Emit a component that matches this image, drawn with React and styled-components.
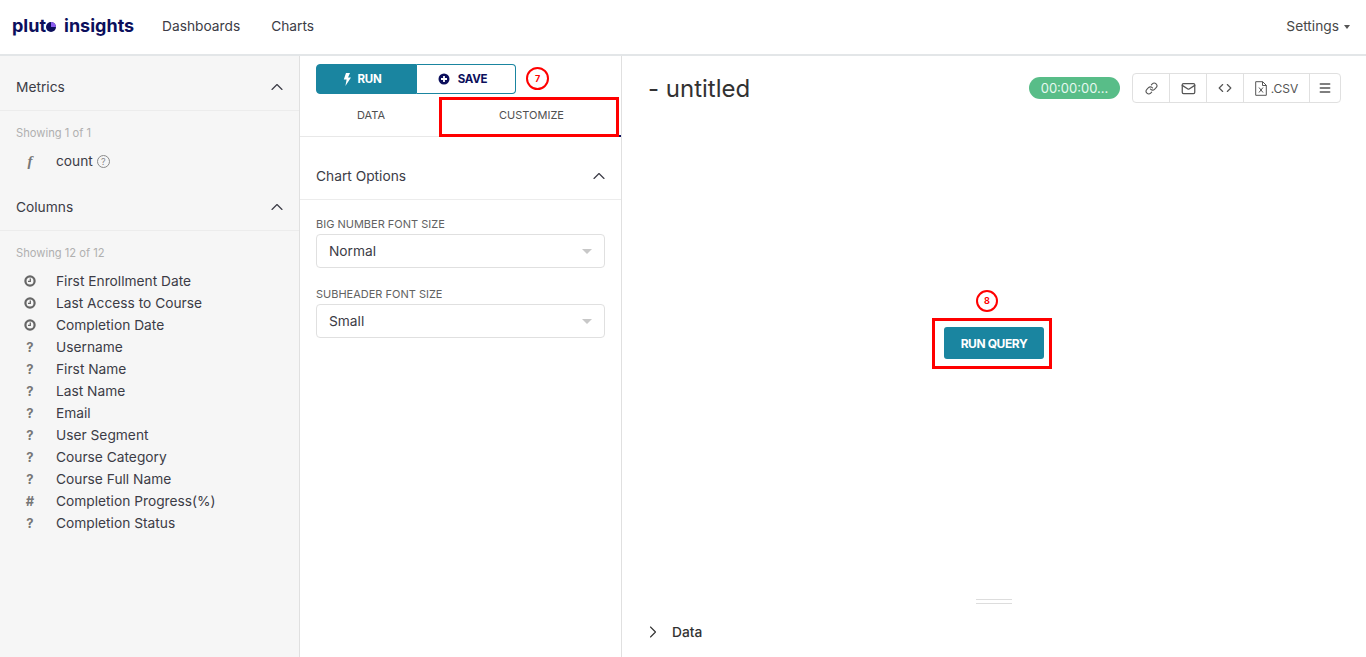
import React from "react";
import styled, { createGlobalStyle } from "styled-components";
import { ChevronUp, ChevronRight, Link, Mail, Code, Menu } from "lucide-react";

const GlobalStyle = createGlobalStyle`
  html, body { margin: 0; padding: 0; height: 100%; background: #fff; overflow: hidden; }
  * { box-sizing: border-box; }
  body { font-family: "Inter", "Open Sans", sans-serif; color: #323232; }
`;

const Page = styled.div`
  width: 1366px;
  height: 657px;
  display: flex;
  flex-direction: column;
`;
const Header = styled.header`
  height: 56px;
  flex: none;
  display: flex;
  align-items: center;
  padding: 0 16px 2px 12px;
  border-bottom: 2px solid #e3e6e8;
`;
const Logo = styled.div`
  width: 150px;
  margin-top: -2px;
  font-size: 18px;
  font-weight: 700;
  color: #0c0f5c;
  display: flex;
  align-items: center;
`;
const LogoMark = styled.svg`
  width: 10px;
  height: 10px;
  margin: 3px 8px 0 0;
`;
const NavLink = styled.a`
  font-size: 13.75px;
  color: #3c3c46;
  margin-right: 31px;
`;
const Settings = styled.div`
  margin-left: auto;
  font-size: 13.75px;
  color: #484848;
  display: flex;
  align-items: center;
  gap: 5px;
  &::after {
    content: "";
    border: 3px solid transparent;
    border-top: 4px solid #555;
    margin-top: 4px;
  }
`;
const Body = styled.div`
  flex: 1;
  display: flex;
  min-height: 0;
`;
const Sidebar = styled.aside`
  width: 300px;
  flex: none;
  background: #f6f6f6;
  border-right: 1px solid #e0e0e0;
`;
const SectionHead = styled.div`
  height: ${(p) => (p.$tall ? 63 : 55)}px;
  display: flex;
  align-items: center;
  justify-content: space-between;
  padding: ${(p) => (p.$tall ? 15 : 7)}px 12px 0 16px;
  font-size: 13.75px;
  color: #3c3c46;
  border-bottom: 1px solid #ececec;
`;
const Showing = styled.div`
  font-size: 11.2px;
  color: #b0b0b0;
  padding: 15px 16px 9px;
  line-height: 15px;
`;
const FieldList = styled.div`
  margin-bottom: ${(p) => p.$gap || 0}px;
`;
const FieldRow = styled.div`
  height: 22px;
  display: flex;
  align-items: center;
  font-size: 13.75px;
  color: #3c3c46;
`;
const FieldIcon = styled.span`
  width: 56px;
  flex: none;
  padding-left: 4px;
  display: flex;
  justify-content: center;
  color: #777;
  font-size: ${(p) => (p.$serif ? 15 : 13)}px;
  font-weight: 700;
  font-family: ${(p) => (p.$serif ? '"Liberation Serif", serif' : '"Inter", sans-serif')};
  font-style: ${(p) => (p.$serif ? "italic" : "normal")};
`;
const HelpMark = styled.span`
  width: 13px;
  height: 13px;
  margin-left: 4px;
  border: 1px solid #8a8a8a;
  border-radius: 50%;
  font-size: 9px;
  line-height: 11px;
  text-align: center;
  color: #8a8a8a;
`;
const Controls = styled.section`
  width: 322px;
  flex: none;
  border-right: 1px solid #e0e0e0;
`;
const ActionRow = styled.div`
  display: flex;
  align-items: center;
  padding: 8px 16px 3px;
  height: 41px;
`;
const RunButton = styled.button`
  width: 101px;
  height: 30px;
  border: 1px solid #1a85a0;
  border-radius: 4px 0 0 4px;
  background: #1a85a0;
  color: #fff;
  font: 700 11.5px "Inter", sans-serif;
  letter-spacing: -0.3px;
  display: flex;
  align-items: center;
  justify-content: center;
  gap: 7px;
  padding: 0 9px 0 0;
`;
const SaveButton = styled(RunButton)`
  width: 99px;
  border-left: none;
  border-radius: 0 4px 4px 0;
  background: #fff;
  color: #0c0f5c;
  gap: 8px;
  padding: 0 7px 0 0;
`;
const StepBadge = styled.span`
  width: ${(p) => p.$size}px;
  height: ${(p) => p.$size}px;
  border: 2px solid #f00;
  border-radius: 50%;
  color: #f00;
  font: 700 9px/${(p) => p.$size - 4}px "Inter", sans-serif;
  text-align: center;
  flex: none;
`;
const RowBadge = styled(StepBadge)`
  margin: -2px 0 0 10px;
`;
const CanvasBadge = styled(StepBadge)`
  margin-right: 14px;
`;
const Tabs = styled.div`
  height: 40px;
  display: flex;
  border-bottom: 1px solid #e8e8e8;
`;
const Tab = styled.div`
  position: relative;
  width: ${(p) => p.$w}px;
  flex: none;
  display: flex;
  align-items: center;
  justify-content: center;
  font-size: 11px;
  color: #505050;
  padding-bottom: 2px;
  margin-bottom: -1px;
  border-bottom: 2px solid ${(p) => (p.$active ? "#0c0f5c" : "transparent")};
`;
const TabHighlight = styled.span`
  position: absolute;
  left: -3px;
  top: 0;
  width: 180px;
  height: 40px;
  border: 3px solid #f00;
`;
const OptionsBody = styled.div`
  padding: 7px 16px 0;
`;
const Label = styled.div`
  font-size: 11px;
  color: #626262;
  margin: ${(p) => p.$top}px 0 3px;
  line-height: 14px;
`;
const Select = styled.div`
  height: 34px;
  border: 1px solid #e0e0e0;
  border-radius: 4px;
  display: flex;
  align-items: center;
  justify-content: space-between;
  padding: 0 12px;
  font-size: 13.75px;
  color: #3c3c46;
  &::after {
    content: "";
    border: 5px solid transparent;
    border-top: 5px solid #c8c8c8;
    border-bottom: none;
  }
`;
const Main = styled.main`
  flex: 1;
  display: flex;
  flex-direction: column;
  min-width: 0;
`;
const TitleBar = styled.div`
  height: 66px;
  flex: none;
  display: flex;
  align-items: center;
  padding: 0 25px 2px 26px;
`;
const ChartTitle = styled.h1`
  margin: 0;
  font-size: 24px;
  font-weight: 400;
  color: #323232;
`;
const Timer = styled.span`
  margin-left: auto;
  width: 91px;
  height: 22px;
  border-radius: 11px;
  background: #58bd88;
  color: #e6f8ef;
  font-size: 13px;
  line-height: 22px;
  text-align: center;
`;
const ToolGroup = styled.div`
  margin-left: 12px;
  height: 30px;
  display: flex;
  border: 1px solid #e0e0e0;
  border-radius: 4px;
`;
const ToolButton = styled.div`
  width: ${(p) => p.$w || 37}px;
  display: flex;
  align-items: center;
  justify-content: center;
  gap: 4px;
  font-size: 12px;
  color: #555;
  & + & { border-left: 1px solid #e0e0e0; }
`;
const QueryArea = styled.div`
  flex: 1;
  display: flex;
  flex-direction: column;
  align-items: center;
  justify-content: center;
  padding-bottom: 63px;
  min-height: 0;
`;
const QueryBox = styled.div`
  margin: 6px 4px 0 0;
  width: 120px;
  height: 51px;
  border: 3px solid #f00;
  padding-left: 9px;
  display: flex;
  align-items: center;
`;
const QueryButton = styled.button`
  width: 100px;
  height: 32px;
  border: none;
  border-radius: 3px;
  background: #1a85a0;
  color: #fff;
  font: 700 12px "Inter", sans-serif;
  letter-spacing: -0.4px;
  padding: 0;
`;
const Splitter = styled.div`
  height: 5px;
  width: 36px;
  flex: none;
  align-self: center;
  margin-bottom: 17px;
  border-top: 1px solid #ddd;
  border-bottom: 1px solid #ddd;
`;
const DataToggle = styled.div`
  height: 22px;
  flex: none;
  margin-bottom: 14px;
  display: flex;
  align-items: center;
  gap: 9px;
  padding-left: 21px;
  font-size: 13.75px;
  font-weight: 500;
  color: #323232;
`;

const Clock = () => (
  <svg width="12" height="12" viewBox="0 0 12 12" fill="none" stroke="#666">
    <circle cx="6" cy="6" r="4.6" strokeWidth="2.2" />
    <path d="M6.3 3.4V6.3H4" strokeWidth="1.3" />
  </svg>
);
const Bolt = () => (
  <svg width="8" height="13" viewBox="0 0 8 13" fill="#fff">
    <path d="M3 0h4L5 4.6h3L2.4 13l1.2-6.6H.8z" />
  </svg>
);
const PlusCircle = () => (
  <svg width="12" height="12" viewBox="0 0 12 12">
    <circle cx="6" cy="6" r="5.5" fill="#0c0f5c" />
    <path d="M6 3v6M3 6h6" stroke="#fff" strokeWidth="1.8" />
  </svg>
);
const CsvFile = () => (
  <svg width="12" height="15" viewBox="0 0 12 15" fill="none" stroke="#555">
    <path d="M.7.7h7l3.6 3.6v10H.7zM7.5.7v3.8h3.8" />
    <path d="M4 6.5l4 5M8 6.5l-4 5" />
  </svg>
);

const clock = "clock";
const columns = [
  [clock, "First Enrollment Date"],
  [clock, "Last Access to Course"],
  [clock, "Completion Date"],
  ["?", "Username"],
  ["?", "First Name"],
  ["?", "Last Name"],
  ["?", "Email"],
  ["?", "User Segment"],
  ["?", "Course Category"],
  ["?", "Course Full Name"],
  ["#", "Completion Progress(%)"],
  ["?", "Completion Status"],
];

export default function App() {
  return (
    <Page>
      <GlobalStyle />
      <Header>
        <Logo>
          plut
          <LogoMark viewBox="0 0 10 10">
            <circle cx="5" cy="5" r="5" fill="#0c0f5c" />
            <path d="M5 5V0a5 5 0 0 1 5 5z" fill="#8a5cf0" />
          </LogoMark>
          insights
        </Logo>
        <NavLink>Dashboards</NavLink>
        <NavLink>Charts</NavLink>
        <Settings>Settings</Settings>
      </Header>
      <Body>
        <Sidebar>
          <SectionHead>
            Metrics <ChevronUp size={20} strokeWidth={1.4} />
          </SectionHead>
          <Showing>Showing 1 of 1</Showing>
          <FieldList $gap={4}>
            <FieldRow>
              <FieldIcon $serif>f</FieldIcon>
              count
              <HelpMark>?</HelpMark>
            </FieldRow>
          </FieldList>
          <SectionHead>
            Columns <ChevronUp size={20} strokeWidth={1.4} />
          </SectionHead>
          <Showing>Showing 12 of 12</Showing>
          <FieldList>
            {columns.map(([kind, name]) => (
              <FieldRow key={name}>
                <FieldIcon>{kind === clock ? <Clock /> : kind}</FieldIcon>
                {name}
              </FieldRow>
            ))}
          </FieldList>
        </Sidebar>
        <Controls>
          <ActionRow>
            <RunButton>
              <Bolt /> RUN
            </RunButton>
            <SaveButton>
              <PlusCircle /> SAVE
            </SaveButton>
            <RowBadge $size={23}>7</RowBadge>
          </ActionRow>
          <Tabs>
            <Tab $w={142}>DATA</Tab>
            <Tab $w={179} $active>
              CUSTOMIZE
              <TabHighlight />
            </Tab>
          </Tabs>
          <SectionHead $tall>
            Chart Options <ChevronUp size={20} strokeWidth={1.4} />
          </SectionHead>
          <OptionsBody>
            <Label $top={10}>BIG NUMBER FONT SIZE</Label>
            <Select>Normal</Select>
            <Label $top={19}>SUBHEADER FONT SIZE</Label>
            <Select>Small</Select>
          </OptionsBody>
        </Controls>
        <Main>
          <TitleBar>
            <ChartTitle>- untitled</ChartTitle>
            <Timer>00:00:00...</Timer>
            <ToolGroup>
              <ToolButton $w={36}>
                <Link size={13} />
              </ToolButton>
              <ToolButton>
                <Mail size={15} />
              </ToolButton>
              <ToolButton>
                <Code size={14} />
              </ToolButton>
              <ToolButton $w={66}>
                <CsvFile /> .CSV
              </ToolButton>
              <ToolButton $w={31}>
                <Menu size={14} strokeWidth={2.6} />
              </ToolButton>
            </ToolGroup>
          </TitleBar>
          <QueryArea>
            <CanvasBadge $size={22}>8</CanvasBadge>
            <QueryBox>
              <QueryButton>RUN QUERY</QueryButton>
            </QueryBox>
          </QueryArea>
          <Splitter />
          <DataToggle>
            <ChevronRight size={20} strokeWidth={1.3} /> Data
          </DataToggle>
        </Main>
      </Body>
    </Page>
  );
}
